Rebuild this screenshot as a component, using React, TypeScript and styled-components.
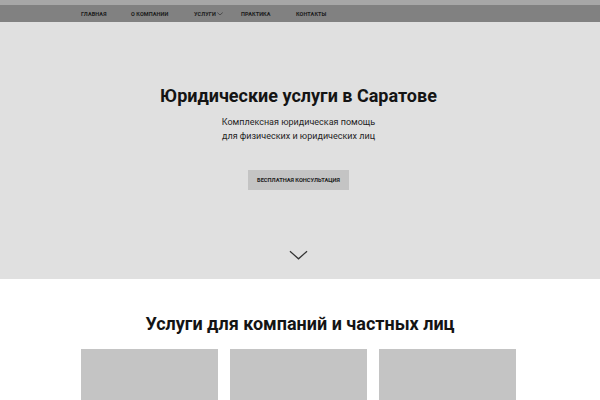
import React from 'react';
import styled, { createGlobalStyle } from 'styled-components';

const GlobalStyle = createGlobalStyle`
  html, body {
    margin: 0;
    padding: 0;
    background: #ffffff;
    font-family: Roboto, "Liberation Sans", Arial, sans-serif;
    color: #111111;
  }
`;

const TopStrip = styled.div`
  height: 5px;
  background: #a7a7a7;
`;

const NavBar = styled.nav`
  height: 17px;
  background: #818181;
`;

const Container = styled.div`
  width: 435px;
  margin-left: calc(50% - 219px);
`;

const NavList = styled(Container)`
  display: flex;
  align-items: center;
  height: 100%;
`;

const NavItem = styled.a<{ $w: number }>`
  display: flex;
  align-items: center;
  gap: 1px;
  width: ${(p) => p.$w}px;
  font-size: 5.5px;
  font-weight: 700;
  color: #1a1a1a;
  text-transform: uppercase;
  text-decoration: none;
  letter-spacing: 0.1px;
`;

const Hero = styled.section`
  height: 257px;
  background: #e0e0e0;
  padding-top: 63px;
  box-sizing: border-box;
`;

const HeroInner = styled(Container)`
  display: flex;
  flex-direction: column;
  align-items: center;
`;

const Title = styled.h1`
  margin: 0;
  font-size: 18px;
  font-weight: 700;
  line-height: 22px;
  color: #141414;
`;

const Subtitle = styled.p`
  margin: 8px 0 0;
  font-size: 9px;
  line-height: 14px;
  text-align: center;
  color: #1f1f1f;
`;

const CtaButton = styled.button`
  margin-top: 27px;
  width: 101px;
  height: 20px;
  border: none;
  background: #c4c4c4;
  font-family: inherit;
  font-size: 5.7px;
  font-weight: 700;
  color: #222222;
  text-transform: uppercase;
  padding: 0;
`;

const ScrollDown = styled.div`
  margin-top: 60px;
  display: flex;
  justify-content: center;
`;

const Services = styled.section`
  padding-top: 35px;
`;

const SectionTitle = styled.h2`
  margin: 0 0 15px;
  text-align: center;
  font-size: 18px;
  line-height: 20px;
  font-weight: 700;
  color: #141414;
`;

const Cards = styled(Container)`
  display: grid;
  grid-template-columns: repeat(3, 1fr);
  gap: 12px;
`;

const Card = styled.div`
  height: 140px;
  background: #c4c4c4;
`;

const Chevron = ({ w, h, sw }: { w: number; h: number; sw: number }) => (
  <svg width={w} height={h} viewBox="0 0 20 10" fill="none">
    <path d="M1 1 L10 9 L19 1" stroke="#333" strokeWidth={sw} />
  </svg>
);

const navItems = [
  { label: 'Главная', w: 50 },
  { label: 'О компании', w: 63 },
  { label: 'Услуги', w: 47, sub: true },
  { label: 'Практика', w: 55 },
  { label: 'Контакты', w: 60 },
];

export default function App() {
  return (
    <>
      <GlobalStyle />
      <TopStrip />
      <NavBar>
        <NavList>
          {navItems.map((item) => (
            <NavItem key={item.label} href="#" $w={item.w}>
              {item.label}
              {item.sub && <Chevron w={6} h={3.5} sw={2.2} />}
            </NavItem>
          ))}
        </NavList>
      </NavBar>
      <Hero>
        <HeroInner>
          <Title>Юридические услуги в Саратове</Title>
          <Subtitle>
            Комплексная юридическая помощь
            <br />
            для физических и юридических лиц
          </Subtitle>
          <CtaButton>Бесплатная консультация</CtaButton>
          <ScrollDown>
            <Chevron w={19} h={10} sw={1.3} />
          </ScrollDown>
        </HeroInner>
      </Hero>
      <Services>
        <SectionTitle>Услуги для компаний и частных лиц</SectionTitle>
        <Cards>
          <Card />
          <Card />
          <Card />
        </Cards>
      </Services>
    </>
  );
}
